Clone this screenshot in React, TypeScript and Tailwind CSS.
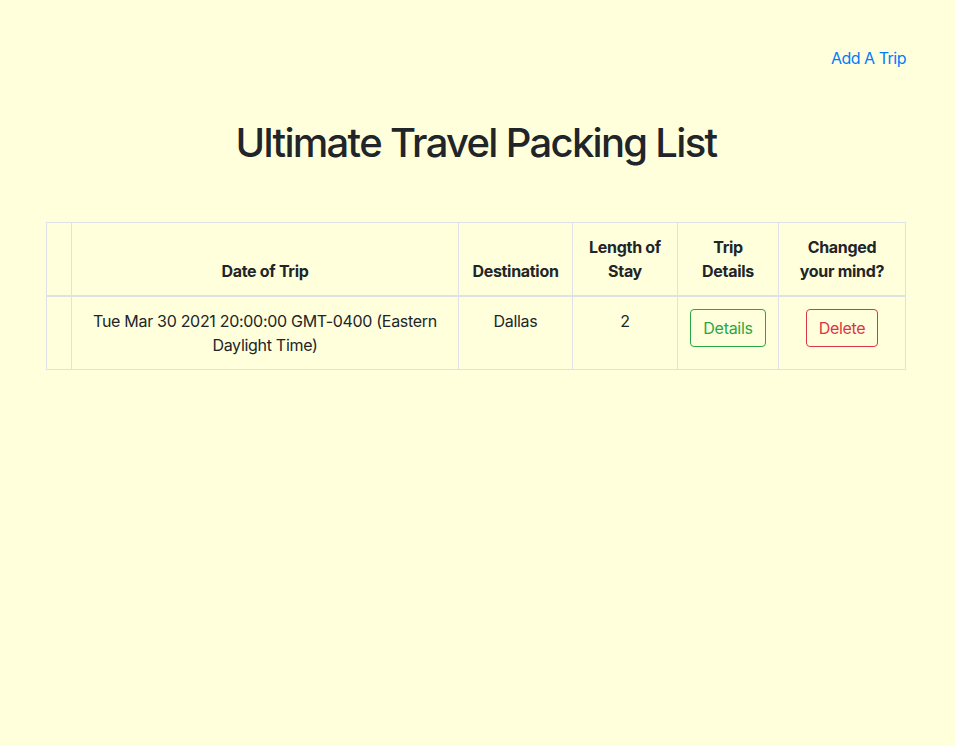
const font = { fontFamily: 'Inter, "Liberation Sans", sans-serif' };

function TripRow() {
  return (
    <tr className="align-top">
      <td className="border border-[#dee2e6] p-3"></td>
      <td className="border border-[#dee2e6] px-3 py-3 text-center">
        Tue Mar 30 2021 20:00:00 GMT-0400 (Eastern Daylight Time)
      </td>
      <td className="border border-[#dee2e6] p-3 text-center">Dallas</td>
      <td className="border border-[#dee2e6] p-3 text-center">2</td>
      <td className="border border-[#dee2e6] p-3 text-center">
        <button className="rounded border border-[#28a745] px-3 py-1.5 leading-6 text-[#28a745]">Details</button>
      </td>
      <td className="border border-[#dee2e6] p-3 text-center">
        <button className="rounded border border-[#dc3545] px-3 py-1.5 leading-6 text-[#dc3545]">Delete</button>
      </td>
    </tr>
  );
}

export default function App() {
  return (
    <div className="min-h-[746px] bg-[#ffffdc] text-base leading-6 tracking-[-0.3px] text-[#212529]" style={font}>
      <div className="ml-[46px] w-[860px] pt-[46px]">
        <div className="flex justify-end">
          <a href="#" className="tracking-[-0.5px] text-[#007bff]">Add A Trip</a>
        </div>
        <h1 className="mt-[49px] text-center text-[40px] font-medium leading-[48px] tracking-[-1.7px]">Ultimate Travel Packing List</h1>
        <table className="mt-[55px] w-full table-fixed border-collapse">
          <colgroup>
            <col className="w-[25px]" />
            <col className="w-[387px]" />
            <col className="w-[114px]" />
            <col className="w-[105px]" />
            <col className="w-[101px]" />
            <col className="w-[127px]" />
          </colgroup>
          <thead>
            <tr className="align-bottom font-bold">
              <th className="border border-b-2 border-[#dee2e6] p-3"></th>
              <th className="border border-b-2 border-[#dee2e6] p-3">Date of Trip</th>
              <th className="border border-b-2 border-[#dee2e6] p-3">Destination</th>
              <th className="border border-b-2 border-[#dee2e6] p-3">Length of Stay</th>
              <th className="border border-b-2 border-[#dee2e6] p-3">Trip Details</th>
              <th className="border border-b-2 border-[#dee2e6] p-3">Changed your mind?</th>
            </tr>
          </thead>
          <tbody>
            <TripRow />
          </tbody>
        </table>
      </div>
    </div>
  );
}
